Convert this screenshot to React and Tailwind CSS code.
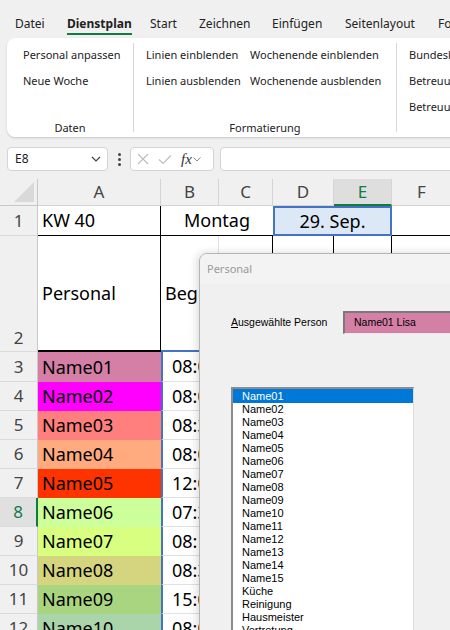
import React from 'react';

const ui = "font-['Noto_Sans',sans-serif]";
const dlg = "font-['Liberation_Sans',Arial,sans-serif]";

const tabs = [
    { label: 'Datei', w: 'w-[52px]' },
    { label: 'Dienstplan', w: 'w-[83px]', active: true },
    { label: 'Start', w: 'w-[49px]' },
    { label: 'Zeichnen', w: 'w-[73px]' },
    { label: 'Einfügen', w: 'w-[73px]' },
    { label: 'Seitenlayout', w: 'w-[93px]' },
    { label: 'Formeln', w: 'w-[60px]' },
];

const people = [
    { name: 'Name01', time: '08:00', bg: 'bg-[#d47fa6]' },
    { name: 'Name02', time: '08:00', bg: 'bg-[#ff00ff]' },
    { name: 'Name03', time: '08:30', bg: 'bg-[#ff7f7f]' },
    { name: 'Name04', time: '08:00', bg: 'bg-[#ffaa7f]' },
    { name: 'Name05', time: '12:00', bg: 'bg-[#ff3300]' },
    { name: 'Name06', time: '07:30', bg: 'bg-[#ccff99]', sel: true },
    { name: 'Name07', time: '08:15', bg: 'bg-[#d9ff80]' },
    { name: 'Name08', time: '08:30', bg: 'bg-[#d5d580]' },
    { name: 'Name09', time: '15:00', bg: 'bg-[#aad580]' },
    { name: 'Name10', time: '08:00', bg: 'bg-[#aad4aa]' },
];

const listItems = [
    'Name01', 'Name02', 'Name03', 'Name04', 'Name05', 'Name06', 'Name07', 'Name08',
    'Name09', 'Name10', 'Name11', 'Name12', 'Name13', 'Name14', 'Name15',
    'Küche', 'Reinigung', 'Hausmeister', 'Vertretung', 'Sonstiges',
];

const RowHead = ({ num, sel, bottom }) => (
    <div className={`w-[38px] shrink-0 flex justify-center text-[17px] border-b border-[#dadada] ${bottom ? 'items-end pb-[1px]' : 'items-center'} ${sel ? 'bg-[#e0e0e0] text-[#107c41] border-r-2 border-r-[#107c41]' : 'bg-[#f0f0f0] text-[#444] border-r border-r-[#c8c8c8]'}`}>
        {num}
    </div>
);

const App = () => {
    return (
        <div className={`relative w-[450px] h-[630px] overflow-hidden bg-[#f0f0f0] ${ui}`}>
            {/* Tabs */}
            <div className="flex h-[38px] pl-[15px] pt-[15px] text-[12px] leading-[18px] text-[#222]">
                {tabs.map(tab => (
                    <div key={tab.label} className={`${tab.w} shrink-0`}>
                        {tab.active ? (
                            <span className="inline-block font-bold border-b-2 border-[#107c41]">{tab.label}</span>
                        ) : tab.label}
                    </div>
                ))}
            </div>

            {/* Ribbon */}
            <div className="ml-[7px] w-[470px] h-[99px] bg-white rounded-[8px] shadow-[0_1px_2px_rgba(0,0,0,0.18)] flex text-[11px] leading-[18px] text-[#222]">
                <div className="w-[126px] shrink-0 flex flex-col">
                    <div className="pl-[16px] pt-[8px] flex flex-col gap-[8px]">
                        <span>Personal anpassen</span>
                        <span>Neue Woche</span>
                    </div>
                    <div className="mt-auto text-center">Daten</div>
                </div>
                <div className="w-px shrink-0 bg-[#d6d6d6] my-[5px]" />
                <div className="w-[262px] shrink-0 flex flex-col">
                    <div className="pl-[12px] pt-[8px] flex">
                        <div className="w-[104px] flex flex-col gap-[8px]">
                            <span>Linien einblenden</span>
                            <span>Linien ausblenden</span>
                        </div>
                        <div className="flex flex-col gap-[8px]">
                            <span>Wochenende einblenden</span>
                            <span>Wochenende ausblenden</span>
                        </div>
                    </div>
                    <div className="mt-auto text-center">Formatierung</div>
                </div>
                <div className="w-px shrink-0 bg-[#d6d6d6] my-[5px]" />
                <div className="flex-1 flex flex-col">
                    <div className="pl-[12px] pt-[8px] flex flex-col gap-[8px] whitespace-nowrap">
                        <span>Bundesland wählen</span>
                        <span>Betreuung einblenden</span>
                        <span>Betreuung ausblenden</span>
                    </div>
                </div>
            </div>

            {/* Formula bar */}
            <div className="flex items-center h-[24px] mt-[10px] ml-[7px] text-[12px] text-[#222]">
                <div className="w-[101px] h-full shrink-0 bg-white border border-[#d4d4d4] rounded-[4px] flex items-center justify-between pl-[7px] pr-[6px]">
                    <span>E8</span>
                    <svg width="10" height="6" viewBox="0 0 10 6"><path d="M1 1l4 4 4-4" stroke="#444" strokeWidth="1.2" fill="none" /></svg>
                </div>
                <div className="w-[22px] shrink-0 flex flex-col items-center gap-[2px]">
                    <span className="w-[3px] h-[3px] rounded-full bg-[#444]" />
                    <span className="w-[3px] h-[3px] rounded-full bg-[#444]" />
                    <span className="w-[3px] h-[3px] rounded-full bg-[#444]" />
                </div>
                <div className="w-[84px] h-full shrink-0 bg-white border border-[#d4d4d4] rounded-[4px] flex items-center pl-[6px] gap-[9px]">
                    <svg width="12" height="12" viewBox="0 0 12 12"><path d="M1 1l10 10M11 1L1 11" stroke="#bdbdbd" strokeWidth="1.1" fill="none" /></svg>
                    <svg width="14" height="11" viewBox="0 0 14 11"><path d="M1 5.5l4 4L13 1.5" stroke="#bdbdbd" strokeWidth="1.1" fill="none" /></svg>
                    <span className="flex items-center gap-[1px]">
                        <span className="font-['Liberation_Serif',serif] italic text-[15px] leading-none text-[#333]">fx</span>
                        <svg width="8" height="5" viewBox="0 0 8 5"><path d="M0.5 0.5l3.5 3.5 3.5-3.5" stroke="#888" strokeWidth="1" fill="none" /></svg>
                    </span>
                </div>
                <div className="ml-[6px] w-[300px] h-full shrink-0 bg-white border border-[#d4d4d4] rounded-[4px]" />
            </div>

            {/* Sheet */}
            <div className="mt-[8px] text-[18px] text-black">
                {/* Column headers */}
                <div className="flex h-[27px] text-[17px] text-[#444]">
                    <div className="w-[38px] shrink-0 bg-[#f0f0f0] border-r border-b border-[#c8c8c8] flex items-end justify-end pr-[3px] pb-[3px]">
                        <svg width="20" height="20" viewBox="0 0 20 20"><polygon points="20,0 20,20 0,20" fill="#d9d9d9" /></svg>
                    </div>
                    <div className="w-[123px] shrink-0 bg-[#f0f0f0] border-r border-b border-[#d4d4d4] flex items-center justify-center">A</div>
                    <div className="w-[58px] shrink-0 bg-[#f0f0f0] border-r border-b border-[#d4d4d4] flex items-center justify-center">B</div>
                    <div className="w-[54px] shrink-0 bg-[#f0f0f0] border-r border-b border-[#d4d4d4] flex items-center justify-center">C</div>
                    <div className="w-[61px] shrink-0 bg-[#f0f0f0] border-r border-b border-[#d4d4d4] flex items-center justify-center">D</div>
                    <div className="w-[58px] shrink-0 bg-[#dedede] border-r border-r-[#d4d4d4] border-b-2 border-b-[#107c41] flex items-center justify-center text-[#107c41]">E</div>
                    <div className="w-[60px] shrink-0 bg-[#f0f0f0] border-r border-b border-[#d4d4d4] flex items-center justify-center">F</div>
                </div>

                {/* Row 1 */}
                <div className="flex h-[30px]">
                    <RowHead num="1" />
                    <div className="w-[123px] shrink-0 bg-white border-r border-b border-black flex items-center pl-[4px]">KW 40</div>
                    <div className="w-[112px] shrink-0 bg-white border-b border-black flex items-center justify-center">Montag</div>
                    <div className="w-[119px] shrink-0 bg-[#dce8f5] border-2 border-[#4472c4] flex items-center justify-center">29. Sep.</div>
                    <div className="w-[60px] shrink-0 bg-white border-b border-black" />
                </div>

                {/* Row 2 */}
                <div className="flex h-[116px]">
                    <RowHead num="2" bottom />
                    <div className="w-[123px] shrink-0 bg-white border-r border-b-2 border-black flex items-center pl-[4px]">Personal</div>
                    <div className="w-[58px] shrink-0 bg-white border-r border-r-[#e1e1e1] border-b-2 border-b-[#4472c4] flex items-center pl-[4px] overflow-hidden">Beginn</div>
                    <div className="w-[54px] shrink-0 bg-white border-r border-b border-black" />
                    <div className="w-[61px] shrink-0 bg-white border-r border-b border-black" />
                    <div className="w-[58px] shrink-0 bg-white border-r border-b border-black" />
                    <div className="w-[60px] shrink-0 bg-white border-b border-[#e1e1e1]" />
                </div>

                {/* Rows 3+ */}
                {people.map((p, i) => (
                    <div key={p.name} className={`flex ${i === 0 ? 'h-[30px]' : 'h-[29px]'}`}>
                        <RowHead num={i + 3} sel={p.sel} />
                        <div className={`w-[123px] shrink-0 ${p.bg} flex items-center pl-[4px]`}>{p.name}</div>
                        <div className="w-[58px] shrink-0 bg-white border-l-2 border-l-[#4472c4] border-r border-r-[#e1e1e1] border-b border-b-[#e1e1e1] flex items-center pl-[9px] overflow-hidden">{p.time}</div>
                        <div className="w-[54px] shrink-0 bg-white border-r border-b border-[#e1e1e1]" />
                        <div className="w-[61px] shrink-0 bg-white border-r border-b border-[#e1e1e1]" />
                        <div className="w-[58px] shrink-0 bg-white border-r border-b border-[#e1e1e1]" />
                        <div className="w-[60px] shrink-0 bg-white border-b border-[#e1e1e1]" />
                    </div>
                ))}
            </div>

            {/* Dialog */}
            <div className="absolute left-[199px] top-[253px] w-[270px] h-[400px] z-10 bg-[#f0f0f0] border border-[#b4b4b4] rounded-tl-[8px] shadow-[-2px_0_8px_rgba(0,0,0,0.15)] overflow-hidden">
                <div className="h-[30px] bg-[#f3f3f3] flex items-center pl-[7px] text-[11px] text-[#9a9a9a]">Personal</div>
                <div className={`${dlg} text-[11px] text-black`}>
                    <div className="flex items-center mt-[27px] pl-[31px] text-[10.5px]">
                        <span className="w-[112px] shrink-0"><span className="underline">A</span>usgewählte Person</span>
                        <div className="w-[130px] h-[23px] shrink-0 bg-[#d47fa6] border-l-2 border-t-2 border-[#7a7a7a] border-b border-b-[#e8e8e8] flex items-center pl-[9px]">Name01 Lisa</div>
                    </div>
                    <div className="mt-[53px] ml-[31px] w-[183px] h-[260px] bg-white border-t-2 border-l-2 border-[#8c8c8c] border-r border-r-[#dcdcdc] overflow-hidden">
                        {listItems.map((item, i) => (
                            <div key={item} className={`h-[13px] leading-[13px] pl-[9px] ${i === 0 ? 'bg-[#0078d7] text-white h-[14px] leading-[14px]' : ''}`}>{item}</div>
                        ))}
                    </div>
                </div>
            </div>
        </div>
    );
};

export default App;
